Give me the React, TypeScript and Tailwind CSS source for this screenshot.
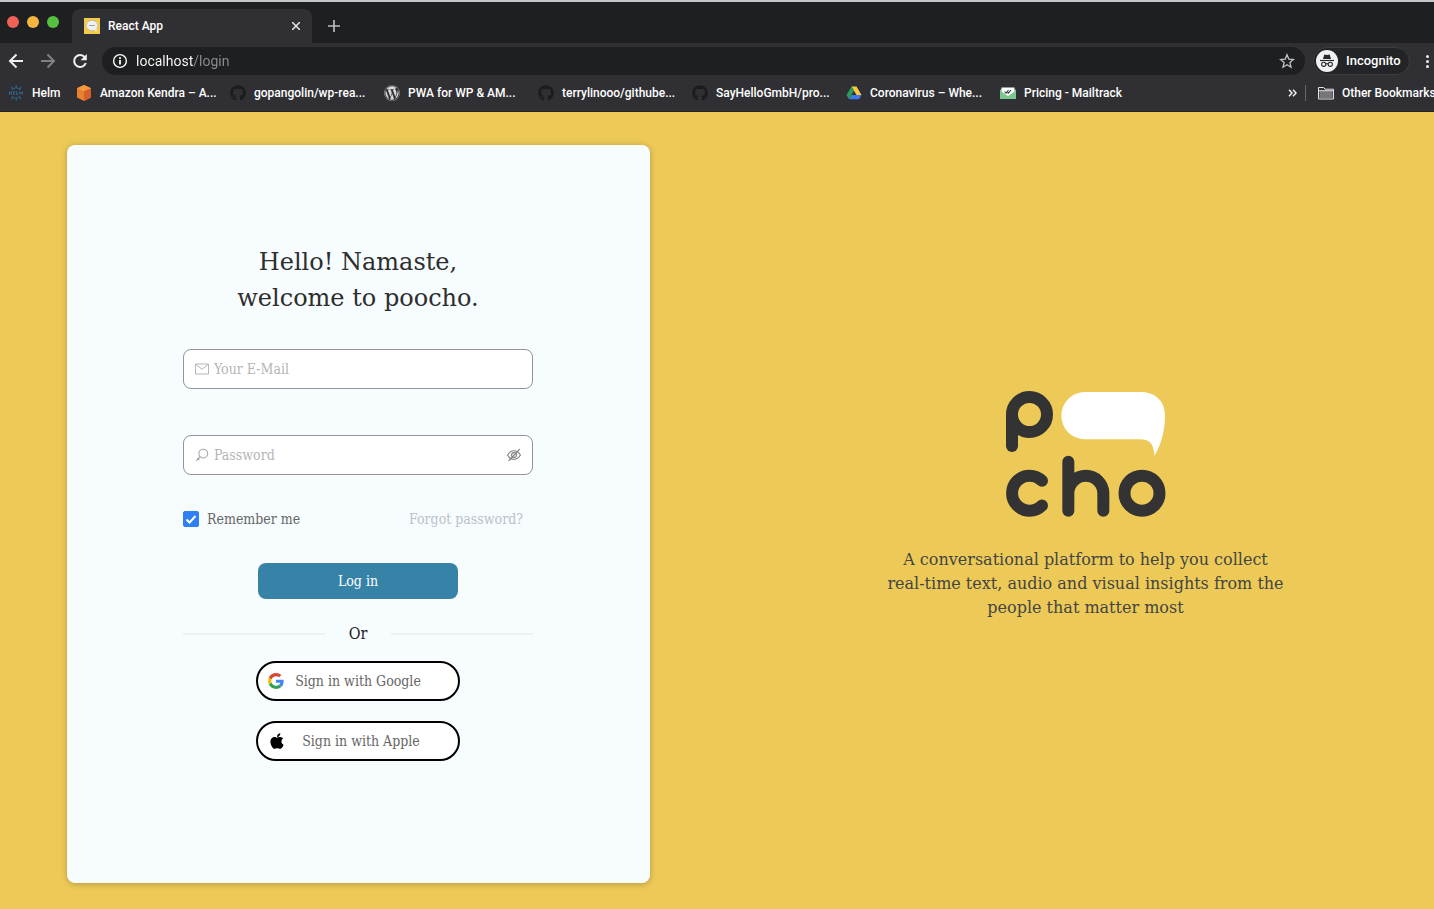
import { useState } from "react";
import type { ReactNode } from "react";
import { FaApple, FaGithub, FaWordpress } from "react-icons/fa";
import { SiHelm } from "react-icons/si";

function AmazonIcon() {
  return (
    <svg viewBox="0 0 16 16" className="size-4">
      <path d="M8 0 15 3.200v9.200L8 16 1 12.400V3.200Z" fill="#e8812f" />
      <path d="M8 0 15 3.200 8 6.200 1 3.200Z" fill="#f6993f" />
      <path d="M8 6.200 15 3.200v9.200L8 16Z" fill="#d4612a" />
    </svg>
  );
}

function DriveIcon() {
  return (
    <svg viewBox="0 0 16 16" className="size-4">
      <path d="M5.500 1.500h5L15.500 10h-5Z" fill="#fbc944" />
      <path d="M5.500 1.500 8 5.800 3 14.300.500 10Z" fill="#2c9b57" />
      <path d="M5.500 10h10L13 14.300H3Z" fill="#3f78ea" />
    </svg>
  );
}

function MailtrackIcon() {
  return (
    <svg viewBox="0 0 16 16" className="size-4">
      <path d="M0 4.500h16V14H0Z" fill="#63b778" />
      <path d="M1.500 2.500h13v5L8 12 1.500 7.500Z" fill="#fff" />
      <path d="M0 5.500 8 11l8-5.500V14H0Z" fill="#7cc78d" />
      <path d="m4.500 6.500 1.500 1.700 2.500-3M7.500 7.500l.8.700 2.700-3" fill="none" stroke="#37474f" strokeWidth="1.100" />
    </svg>
  );
}

function FaviconIcon() {
  return (
    <svg viewBox="0 0 16 16" className="size-4">
      <path d="M0 0h16v16H0Z" fill="#f4cb49" />
      <ellipse cx="8" cy="7.500" rx="5.800" ry="5.200" fill="#f1f1f1" stroke="#a9a9a3" strokeWidth=".6" />
      <path d="m9.500 12 3.700 1.800-.8-3.800Z" fill="#e6e6e6" />
      <path d="M5.300 7.500h5.400" stroke="#777" strokeWidth="1.100" strokeDasharray="1.300 .7" />
    </svg>
  );
}

function BackIcon() {
  return (
    <svg viewBox="0 0 16 16" className="size-4" fill="none" stroke="currentColor" strokeWidth="2">
      <path d="M15 8H2.500M8.500 1.500 2 8l6.500 6.500" />
    </svg>
  );
}

function ForwardIcon() {
  return (
    <svg viewBox="0 0 16 16" className="size-4" fill="none" stroke="currentColor" strokeWidth="2">
      <path d="M1 8h12.500M7.500 1.500 14 8l-6.500 6.500" />
    </svg>
  );
}

function ReloadIcon() {
  return (
    <svg viewBox="0 0 16 16" className="size-4" fill="none" stroke="currentColor" strokeWidth="2">
      <path d="M13.800 10A6 6 0 1 1 12.800 4.200" />
      <path d="M14.800 1v6.200H8.600Z" fill="currentColor" stroke="none" />
    </svg>
  );
}

function InfoIcon() {
  return (
    <svg viewBox="0 0 16 16" className="size-4 shrink-0" fill="none" stroke="#fff" strokeWidth="1.400">
      <circle cx="8" cy="8" r="6.400" />
      <path d="M8 7v4.500M8 4.300v1.700" strokeWidth="1.800" />
    </svg>
  );
}

function StarIcon() {
  return (
    <svg viewBox="0 0 16 16" className="size-4" fill="none" stroke="#c3c4c6" strokeWidth="1.300">
      <path d="m8 1.800 1.800 4.300 4.700.4-3.600 3.100 1.100 4.600L8 11.800l-4 2.400 1.100-4.600-3.600-3.100 4.700-.4Z" />
    </svg>
  );
}

function IncognitoIcon() {
  return (
    <svg viewBox="0 0 22 22" className="size-[22px]">
      <circle cx="11" cy="11" r="11" fill="#f1f1f2" />
      <path d="M7 9 8.300 4.500l2.700.6 2.700-.6L15 9Z" fill="#27282a" />
      <path d="M4 10.500h14" stroke="#27282a" strokeWidth="1.200" />
      <g fill="none" stroke="#27282a" strokeWidth="1.100">
        <circle cx="7.700" cy="14.300" r="2.100" />
        <circle cx="14.300" cy="14.300" r="2.100" />
        <path d="M9.800 14q1.200-.7 2.400 0" />
      </g>
    </svg>
  );
}

function FolderIcon() {
  return (
    <svg viewBox="0 0 16 14" className="h-[14px] w-4" fill="none" stroke="#e4e4e6" strokeWidth="1">
      <path d="M.5 13V1.500h5.200l1.300 1.700h8.500V13Z" />
      <path d="M1.500 5h13v7h-13Z" fill="#77777a" stroke="none" />
      <path d="M.5 4.700h15" />
    </svg>
  );
}

function MailIcon() {
  return (
    <svg viewBox="0 0 14 12" className="h-3 w-[14px]" fill="none" stroke="#b5b5b5" strokeWidth="1">
      <path d="M.5 1h13v10H.5Z" />
      <path d="m1 1.500 6 4.800 6-4.800" />
    </svg>
  );
}

function KeyIcon() {
  return (
    <svg viewBox="0 0 14 14" className="size-[14px]" fill="none" stroke="#a9a9a9" strokeWidth="1.100">
      <circle cx="8.300" cy="5.600" r="4.400" />
      <path d="M5.200 8.800 1.200 12.900M2.300 10l2 2M5.200 8.800l-1-1" />
    </svg>
  );
}

function HiddenEyeIcon() {
  return (
    <svg viewBox="0 0 14 14" className="size-[14px]" fill="none" stroke="#7c7c7c" strokeWidth="1.100">
      <path d="M.6 7Q3 2.700 7 2.700T13.400 7Q11 11.300 7 11.300T.6 7Z" />
      <circle cx="7" cy="7" r="2.400" />
      <path d="M1.600 12.800 12.800 1.200" strokeWidth="1.200" />
    </svg>
  );
}

function GoogleIcon() {
  return (
    <svg viewBox="0 0 48 48" className="size-4">
      <path fill="#db4437" d="M24 9.500c3.540 0 6.710 1.220 9.210 3.600l6.850-6.850C35.900 2.380 30.470 0 24 0 14.620 0 6.510 5.380 2.560 13.220l7.980 6.190C12.430 13.720 17.740 9.500 24 9.500z" />
      <path fill="#4285f4" d="M46.980 24.550c0-1.570-.15-3.090-.38-4.550H24v9.020h12.940c-.58 2.960-2.260 5.480-4.780 7.180l7.730 6c4.510-4.180 7.090-10.360 7.090-17.650z" />
      <path fill="#fbbc05" d="M10.530 28.590c-.48-1.450-.76-2.990-.76-4.590s.27-3.140.76-4.590l-7.980-6.190C.92 16.460 0 20.120 0 24c0 3.880.92 7.540 2.560 10.780l7.970-6.190z" />
      <path fill="#34a053" d="M24 48c6.480 0 11.930-2.130 15.890-5.810l-7.730-6c-2.150 1.450-4.920 2.300-8.160 2.300-6.260 0-11.570-4.220-13.470-9.910l-7.980 6.190C6.510 42.620 14.620 48 24 48z" />
    </svg>
  );
}

function PoochoLogo() {
  return (
    <svg viewBox="45 30 486 384" className="h-32 w-[162px]" role="img" aria-label="poocho">
      <g fill="none" stroke="#333" strokeWidth="36" strokeLinecap="round">
        <circle cx="118.500" cy="103.500" r="52.500" />
        <path d="M66 103.500V198" />
        <path d="M156 302.500A52.500 52.500 0 1 0 156 376.500" />
        <path d="M235 245V392M235 340a52.500 52.500 0 0 1 105 0V392" />
        <circle cx="456" cy="339.500" r="52.500" />
      </g>
      <path d="M285 36H453C496 36 525 64 525 106C525 152 514 194 493 228C492 193 480 178 450 178H285A71 71 0 0 1 285 36Z" fill="#fff" />
    </svg>
  );
}

const bookmarks: { label: string; icon: ReactNode; width: string }[] = [
  { label: "Helm", icon: <SiHelm className="size-4 text-[#2d6a8e]" />, width: "w-[68px]" },
  { label: "Amazon Kendra – A...", icon: <AmazonIcon />, width: "w-[154px]" },
  { label: "gopangolin/wp-rea...", icon: <FaGithub className="size-4 text-[#1b1c1e]" />, width: "w-[154px]" },
  { label: "PWA for WP & AM...", icon: <FaWordpress className="size-4 text-[#d8d8d8]" />, width: "w-[154px]" },
  { label: "terrylinooo/githube...", icon: <FaGithub className="size-4 text-[#1b1c1e]" />, width: "w-[154px]" },
  { label: "SayHelloGmbH/pro...", icon: <FaGithub className="size-4 text-[#1b1c1e]" />, width: "w-[154px]" },
  { label: "Coronavirus – Whe...", icon: <DriveIcon />, width: "w-[154px]" },
  { label: "Pricing - Mailtrack", icon: <MailtrackIcon />, width: "w-[154px]" },
];

function TabStrip() {
  return (
    <div className="flex h-[43px] items-end border-t-2 border-[#c4c5c9] bg-[#1e1f21]">
      <div className="flex h-[41px] w-[72px] items-center gap-2 pb-[2px] pl-[7px]">
        <button aria-label="Close window" className="size-3 rounded-full bg-[#ee6156]" />
        <button aria-label="Minimize window" className="size-3 rounded-full bg-[#f5b63e]" />
        <button aria-label="Zoom window" className="size-3 rounded-full bg-[#57c043]" />
      </div>
      <div className="flex h-[34px] w-60 items-center rounded-t-lg bg-[#303034] px-3">
        <FaviconIcon />
        <span className="ml-2 flex-1 text-xs font-medium text-white">React App</span>
        <button aria-label="Close tab" className="text-[#e8e8e9]">
          <svg viewBox="0 0 8 8" className="size-2" stroke="currentColor" strokeWidth="1.500">
            <path d="m0 0 8 8M8 0 0 8" />
          </svg>
        </button>
      </div>
      <button aria-label="New tab" className="ml-4 flex h-[34px] items-center text-[#b9babc]">
        <svg viewBox="0 0 12 12" className="size-3" stroke="currentColor" strokeWidth="1.700">
          <path d="M6 0v12M0 6h12" />
        </svg>
      </button>
    </div>
  );
}

function Toolbar() {
  return (
    <div className="flex h-9 items-center bg-[#303034] pl-2">
      <div className="flex w-[94px] gap-4">
        <button aria-label="Back" className="text-[#f1f1f2]"><BackIcon /></button>
        <button aria-label="Forward" className="text-[#808184]"><ForwardIcon /></button>
        <button aria-label="Reload" className="text-[#f1f1f2]"><ReloadIcon /></button>
      </div>
      <div className="flex h-7 min-w-0 flex-1 items-center gap-2 rounded-full bg-[#1e1f21] px-[10px]">
        <InfoIcon />
        <input
          aria-label="Address"
          defaultValue="localhost/login"
          className="min-w-0 flex-1 bg-[linear-gradient(to_right,#ffffff_57px,#8d8e91_57px)] bg-clip-text text-sm text-transparent outline-none"
        />
        <button aria-label="Bookmark this page"><StarIcon /></button>
      </div>
      <button className="ml-2 flex h-7 w-[97px] shrink-0 items-center gap-2 rounded-full border border-[#3c3d41] bg-[#232427] pl-[2px] text-[13px] font-medium text-white">
        <IncognitoIcon />
        Incognito
      </button>
      <button aria-label="Menu" className="ml-4 flex w-2 shrink-0 flex-col items-start gap-[2px]">
        <span className="size-[3px] rounded-full bg-[#eee]" />
        <span className="size-[3px] rounded-full bg-[#eee]" />
        <span className="size-[3px] rounded-full bg-[#eee]" />
      </button>
    </div>
  );
}

function BookmarkBar() {
  return (
    <nav aria-label="Bookmarks" className="flex h-[33px] items-center overflow-hidden border-b border-[#242427] bg-[#303034] pb-1 pl-2 text-xs font-medium whitespace-nowrap text-white">
      {bookmarks.map((bookmark) => (
        <a key={bookmark.label} href="#" className={`flex shrink-0 items-center gap-2 ${bookmark.width}`}>
          <span className="shrink-0">{bookmark.icon}</span>
          {bookmark.label}
        </a>
      ))}
      <div className="ml-auto flex w-[146px] shrink-0 items-center">
        <button aria-label="More bookmarks" className="shrink-0">
          <svg viewBox="0 0 9 8" className="h-2 w-[9px]" fill="none" stroke="#eee" strokeWidth="1.500">
            <path d="m1 .8 3 3.200-3 3.200M5 .8 8 4 5 7.200" />
          </svg>
        </button>
        <span className="ml-2 h-4 w-px shrink-0 bg-[#66676a]" />
        <button className="ml-3 flex shrink-0 items-center gap-2">
          <FolderIcon />
          Other Bookmarks
        </button>
      </div>
    </nav>
  );
}

function LoginForm() {
  const [showPassword, setShowPassword] = useState(false);
  const field =
    "flex h-10 items-center rounded-lg border border-[#929497] bg-white px-[11px] text-sm";
  const social =
    "flex h-10 w-[204px] items-center rounded-full border-2 border-black bg-white px-[10px] text-sm text-[#666]";
  return (
    <form className="flex w-[350px] flex-col items-center" onSubmit={(e) => e.preventDefault()}>
      <h1 className="text-center font-['DejaVu_Serif',serif] text-2xl leading-9 text-[#2e2e2e]">
        Hello! Namaste,
        <br />
        welcome to poocho.
      </h1>
      <label className={`mt-[33px] w-full gap-[5px] ${field}`}>
        <MailIcon />
        <input type="email" aria-label="Your E-Mail" placeholder="Your E-Mail" className="min-w-0 flex-1 outline-none placeholder:text-[#b5b5b5]" />
      </label>
      <div className={`mt-[46px] w-full gap-[5px] ${field}`}>
        <KeyIcon />
        <input
          type={showPassword ? "text" : "password"}
          aria-label="Password"
          placeholder="Password"
          className="min-w-0 flex-1 outline-none placeholder:text-[#b5b5b5]"
        />
        <button type="button" aria-label="Toggle password visibility" onClick={() => setShowPassword(!showPassword)}>
          <HiddenEyeIcon />
        </button>
      </div>
      <div className="mt-8 flex h-6 w-full items-center justify-between pr-[10px] text-sm">
        <label className="flex items-center gap-2 text-[#666]">
          <span className="grid size-4">
            <input type="checkbox" defaultChecked className="peer col-start-1 row-start-1 size-4 appearance-none rounded-xs border border-[#999] checked:border-[#2f80f7] checked:bg-[#2f80f7]" />
            <svg viewBox="0 0 16 16" className="pointer-events-none invisible col-start-1 row-start-1 size-4 peer-checked:visible" fill="none" stroke="#fff" strokeWidth="2">
              <path d="m3.500 8.500 3 3 6-6.500" />
            </svg>
          </span>
          Remember me
        </label>
        <a href="#" className="text-[#bcc1c9]">Forgot password?</a>
      </div>
      <button type="submit" className="mt-8 h-9 w-[200px] rounded-lg bg-[#3783a8] text-sm text-white">
        Log in
      </button>
      <div className="mt-6 flex w-full items-center gap-6 text-base leading-[22px] text-[#1f1f1f]">
        <span className="h-[2px] flex-1 bg-[#ebf0f3]" />
        Or
        <span className="h-[2px] flex-1 bg-[#ebf0f3]" />
      </div>
      <button type="button" className={`mt-4 ${social}`}>
        <GoogleIcon />
        <span className="flex-1 pr-4 text-center">Sign in with Google</span>
      </button>
      <button type="button" className={`mt-5 ${social}`}>
        <FaApple className="size-[18px] text-black" />
        <span className="flex-1 pr-3 text-center">Sign in with Apple</span>
      </button>
    </form>
  );
}

export default function App() {
  return (
    <div className="flex min-h-screen flex-col overflow-hidden bg-[#edca57]">
      <header className="font-['Roboto',sans-serif]">
        <TabStrip />
        <Toolbar />
        <BookmarkBar />
      </header>
      <main className="flex flex-1 font-['DejaVu_Serif_Condensed','DejaVu_Serif',serif]">
        <div className="flex w-1/2 px-[67px] pt-[33px] pb-[26px]">
          <section className="flex flex-1 flex-col items-center rounded-lg bg-[#f7fcff] pt-[99px] pr-px pb-10 shadow-[0_1px_6px_rgba(0,0,0,0.25)]">
            <LoginForm />
          </section>
        </div>
        <section className="flex flex-1 flex-col items-center justify-center pb-3 pl-5">
          <PoochoLogo />
          <p className="mt-[30px] text-center font-['DejaVu_Serif',serif] text-base leading-6 text-[#444]">
            A conversational platform to help you collect
            <br />
            real-time text, audio and visual insights from the
            <br />
            people that matter most
          </p>
        </section>
      </main>
    </div>
  );
}
